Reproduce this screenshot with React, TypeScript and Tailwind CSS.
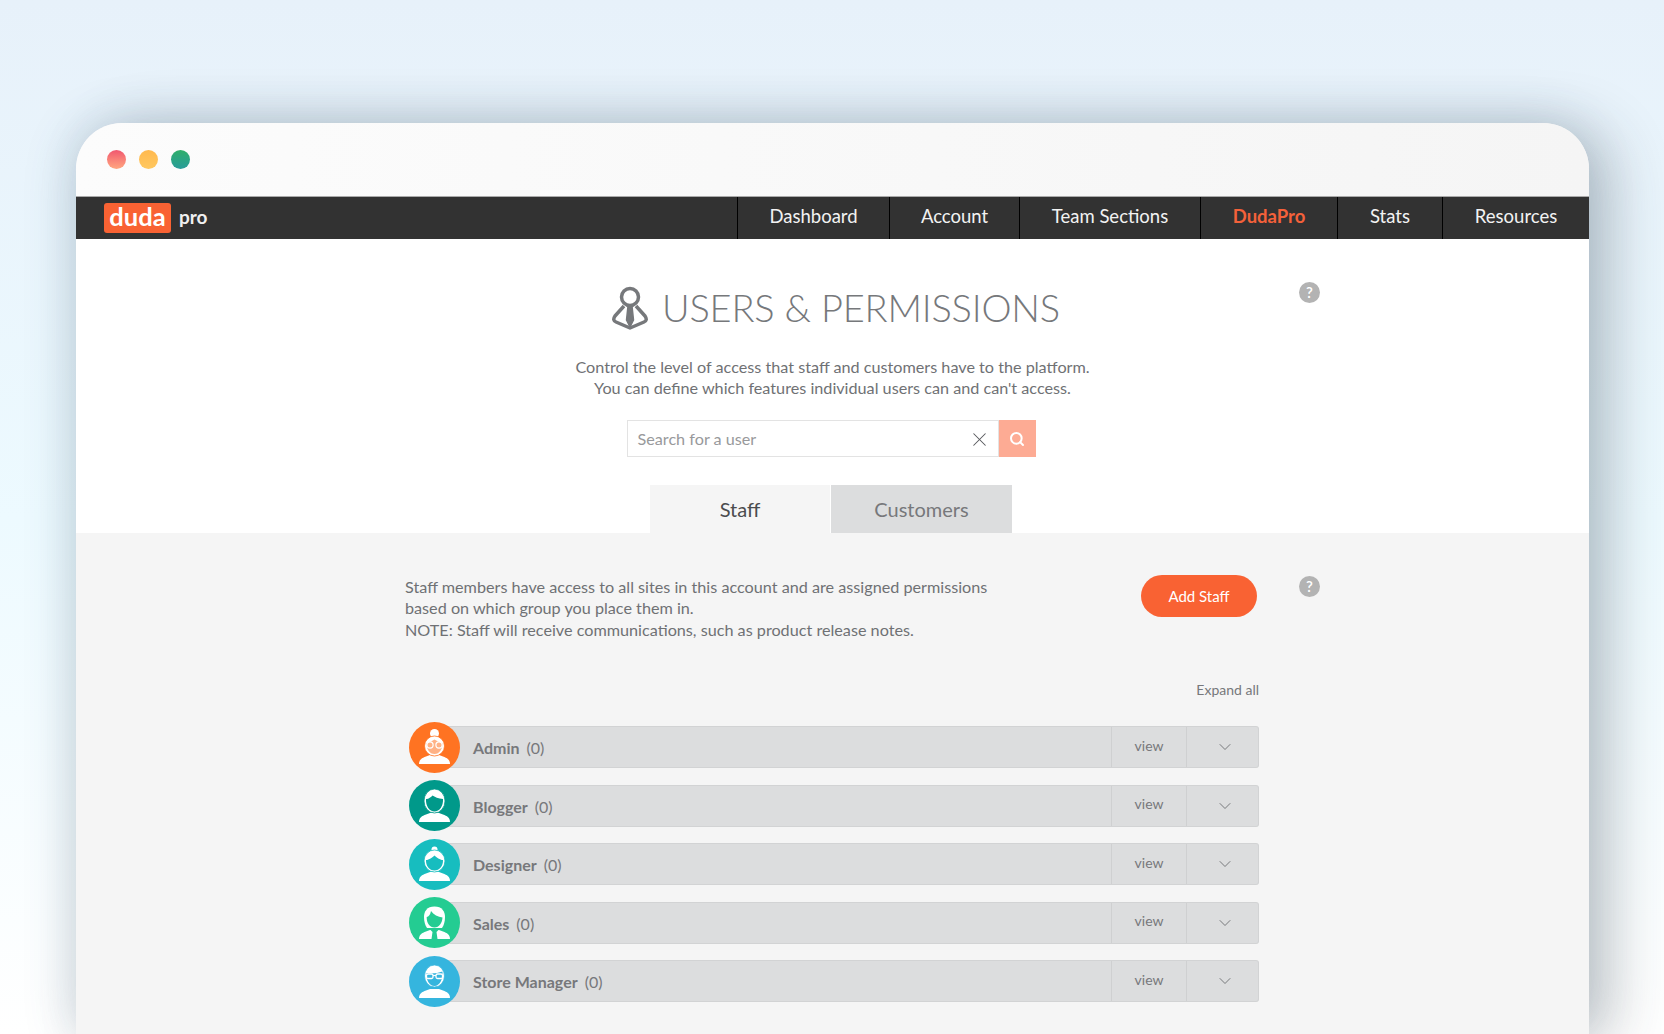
import React from 'react';
import { ChevronDown, Search, X } from 'lucide-react';

const navItems = [
  { label: 'Dashboard', width: 'w-[152px]' },
  { label: 'Account', width: 'w-[130px]' },
  { label: 'Team Sections', width: 'w-[181px]' },
  { label: 'DudaPro', width: 'w-[137px]', active: true },
  { label: 'Stats', width: 'w-[105px]' },
  { label: 'Resources', width: 'w-[147px]' },
];

type AvatarKind = 'admin' | 'blogger' | 'designer' | 'sales' | 'manager';

const roles: { name: string; kind: AvatarKind; color: string }[] = [
  { name: 'Admin', kind: 'admin', color: '#ff7322' },
  { name: 'Blogger', kind: 'blogger', color: '#00998a' },
  { name: 'Designer', kind: 'designer', color: '#17bdbf' },
  { name: 'Sales', kind: 'sales', color: '#24cc92' },
  { name: 'Store Manager', kind: 'manager', color: '#35b5de' },
];

const Avatar: React.FC<{ kind: AvatarKind; color: string }> = ({ kind, color }) => (
  <svg viewBox="0 0 51 51" className="w-[51px] h-[51px] shrink-0 -mr-[21px] relative z-10">
    <circle cx="25.5" cy="25.5" r="25.5" fill={color} />
    {/* shoulders */}
    <path d="M10 42c0-4.500 3-6 7-7.500l4-1.500h9l4 1.500c4 1.500 7 3 7 7.500z" fill="#fff" />
    {kind === 'admin' && (
      <>
        <circle cx="25.5" cy="11.500" r="4.500" fill="#fff" />
        <ellipse cx="25.5" cy="24" rx="10" ry="10" fill="#fff" stroke={color} strokeWidth="0.8" />
        <path d="M17.500 21c3-.5 6-2.500 8-3.500 2 1 5 3 8 3.500.2 6-3 11-8 11s-8.200-5-8-11z" fill={color} opacity="0.55" />
        <circle cx="21" cy="23" r="3.100" fill="none" stroke="#fff" strokeWidth="1.200" />
        <circle cx="30" cy="23" r="3.100" fill="none" stroke="#fff" strokeWidth="1.200" />
      </>
    )}
    {kind === 'blogger' && (
      <>
        <ellipse cx="25.5" cy="21" rx="10.500" ry="12" fill="#fff" stroke={color} strokeWidth="0.8" />
        <path d="M17 19c2 .5 5-2 6.500-3.500 2 1.500 6 3 10.500 3.500.4 7-3.500 12.500-8.500 12.500S16.600 26 17 19z" fill={color} />
      </>
    )}
    {kind === 'designer' && (
      <>
        <circle cx="25.5" cy="10.500" r="3" fill="#fff" />
        <ellipse cx="25.5" cy="22" rx="10.500" ry="11" fill="#fff" stroke={color} strokeWidth="0.8" />
        <path d="M17 21c3 0 6.500-2.500 8.500-4.500 2 2 5.500 4.500 8.500 4.500.2 6-3.500 10.500-8.500 10.500S16.800 27 17 21z" fill={color} />
      </>
    )}
    {kind === 'sales' && (
      <>
        <path d="M25.500 9.500c7.500 0 10.500 5 10.500 10.500 0 4.500-1 8-3 11h-15c-2-3-3-6.500-3-11 0-5.500 3-10.500 10.500-10.500z" fill="#fff" />
        <path d="M22 14c2.500 3.500 7 6 11.500 6.500-.3 5.500-3.300 10-8 10s-8-4.500-7.800-10.500c2 0 3.600-2.500 4.300-6z" fill={color} />
        <path d="M21.500 33h8l-2 2 1 7h-6l1-7z" fill={color} />
      </>
    )}
    {kind === 'manager' && (
      <>
        <ellipse cx="25.5" cy="20" rx="10" ry="11" fill="#fff" stroke={color} strokeWidth="0.8" />
        <path d="M17.500 17c4 .5 11 .5 16-1.500.6 8-3 14.500-8 14.500s-8.500-6-8-13z" fill={color} />
        <rect x="17.500" y="18" width="6.500" height="4.500" rx="1.500" fill="none" stroke="#fff" strokeWidth="1.300" />
        <rect x="27" y="18" width="6.500" height="4.500" rx="1.500" fill="none" stroke="#fff" strokeWidth="1.300" />
        <path d="M24 19.500h3" stroke="#fff" strokeWidth="1.200" />
      </>
    )}
  </svg>
);

const HelpDot: React.FC = () => (
  <div className="w-[21px] h-[21px] rounded-full bg-[#b3b3b3] text-white text-[15px] leading-[21px] text-center font-semibold">?</div>
);

const App: React.FC = () => {
  return (
    <div className="h-[1034px] overflow-hidden flex flex-col pl-[76px] pr-[75px] pt-[123px] bg-gradient-to-b from-[#e7f1fa] via-[#edfaff] to-[#ffffff] font-['Lato',sans-serif]">
      <div className="flex-1 flex flex-col rounded-t-[46px] overflow-hidden bg-[#f5f5f5] shadow-[-4px_0_50px_rgba(50,90,120,0.2),24px_6px_60px_rgba(40,50,60,0.24)]">
        {/* title bar */}
        <div className="h-[73px] bg-gradient-to-r from-[#fcfcfc] to-[#f5f5f5] flex items-center pl-[31px] gap-[13px] shrink-0">
          <span className="w-[19px] h-[19px] rounded-full bg-gradient-to-b from-[#f0566f] to-[#ffa680]" />
          <span className="w-[19px] h-[19px] rounded-full bg-gradient-to-b from-[#ffb94e] to-[#ffc860]" />
          <span className="w-[19px] h-[19px] rounded-full bg-gradient-to-b from-[#2fae69] to-[#2a9c99]" />
        </div>

        {/* nav */}
        <div className="h-[43px] bg-[#323232] border-t border-[#aaaaaa] flex items-center justify-between shrink-0">
          <div className="flex items-center pl-[28px]">
            <div className="w-[67px] h-[30px] bg-[#f96233] rounded-[3px] text-white font-bold text-[25.500px] leading-[27px] text-center">duda</div>
            <div className="ml-[8px] text-[#f0f0f0] font-bold text-[19px] -mt-[2px]">pro</div>
          </div>
          <div className="flex h-full">
            {navItems.map((item) => (
              <div
                key={item.label}
                className={`${item.width} h-full border-l border-black flex items-center justify-center pb-[3px] text-[18.500px] ${item.active ? 'text-[#f4613a] font-bold' : 'text-[#f2f2f2]'}`}
              >
                {item.label}
              </div>
            ))}
          </div>
        </div>

        {/* header */}
        <div className="bg-white h-[294px] shrink-0 flex flex-col items-center">
          <div className="w-full grid grid-cols-[1fr_auto_1fr] pt-[44px]">
            <div />
            <div className="flex items-center gap-[14px] h-[50px] pl-[7px]">
              <svg viewBox="0 0 36 44" className="w-[36px] h-[44px]" fill="none" stroke="#76787b" strokeWidth="3.500" strokeLinejoin="round">
                <circle cx="18" cy="11" r="8.500" />
                <path d="M12 20 3 30c-2 3-1.500 5 1 6l14 6 14-6c2.500-1 3-3 1-6l-9-10" />
                <path d="M16 20h4l1.500 14-3.500 7-3.500-7z" strokeWidth="1.500" fill="#76787b" />
              </svg>
              <h1 className="text-[38px] font-light tracking-[-0.2px] text-[#76787b] leading-none whitespace-nowrap -mt-[2px]">USERS &amp; PERMISSIONS</h1>
            </div>
            <div className="flex justify-end pr-[269px] -mt-[1px]">
              <HelpDot />
            </div>
          </div>
          <p className="mt-[23px] text-center text-[16.200px] leading-[21px] text-[#6f7174]">
            Control the level of access that staff and customers have to the platform.
            <br />
            You can define which features individual users can and can't access.
          </p>
          <div className="mt-[22px] flex h-[37px] pr-[3px]">
            <div className="w-[372px] border border-[#e3e3e3] bg-white flex items-center justify-between pl-[10px] pr-[7px] text-[16.200px] text-[#98999b]">
              <span className="pt-[2px]">Search for a user</span>
              <X size={23} strokeWidth={1.1} className="text-[#55575a] mt-[1px]" />
            </div>
            <div className="w-[37px] bg-[#fdab94] flex items-center justify-center">
              <Search size={16} strokeWidth={3} className="text-white" />
            </div>
          </div>
          <div className="mt-[28px] flex h-[48px] gap-[1px] pr-[3px]">
            <div className="w-[180px] bg-[#f5f5f5] flex items-center justify-center text-[20px] text-[#4b4c4e]">Staff</div>
            <div className="w-[181px] bg-[#dcddde] flex items-center justify-center text-[20px] text-[#77787b]">Customers</div>
          </div>
        </div>

        {/* staff section */}
        <div className="flex-1 pl-[329px] pr-[269px]">
          <div className="flex items-start pt-[43px]">
            <p className="flex-1 text-[16.200px] leading-[21.300px] text-[#6f7174]">
              Staff members have access to all sites in this account and are assigned permissions
              <br />
              based on which group you place them in.
              <br />
              NOTE: Staff will receive communications, such as product release notes.
            </p>
            <button className="w-[116px] h-[42px] -mt-[1px] rounded-full bg-[#f96233] text-white text-[15px]">Add Staff</button>
            <div className="ml-[42px]">
              <HelpDot />
            </div>
          </div>

          <div className="mr-[61px]">
            <div className="mt-[40px] text-right text-[14px] leading-[20px] text-[#77787b]">Expand all</div>
            <div className="mt-[22px] flex flex-col gap-[7.500px] pl-[4px]">
              {roles.map((role) => (
                <div key={role.name} className="flex items-center h-[51px]">
                  <Avatar kind={role.kind} color={role.color} />
                  <div className="flex-1 h-[42px] flex items-stretch bg-[#dcddde] border-y border-r border-[#d2d3d4] rounded-r-[3px]">
                    <div className="flex-1 flex items-center pl-[34px] pt-[2px] text-[16px] text-[#77787b]">
                      <span className="font-bold">{role.name}</span>
                      <span className="ml-[7px]">(0)</span>
                    </div>
                    <div className="w-[75px] border-l border-[#cfd0d1] flex items-center justify-center pb-[4px] text-[14px] text-[#77787b]">view</div>
                    <div className="w-[72px] border-l border-[#cfd0d1] flex items-center justify-center pl-[4px]">
                      <ChevronDown size={20} strokeWidth={0.9} className="text-[#55575a]" />
                    </div>
                  </div>
                </div>
              ))}
            </div>
          </div>
        </div>
      </div>
    </div>
  );
};

export default App;
